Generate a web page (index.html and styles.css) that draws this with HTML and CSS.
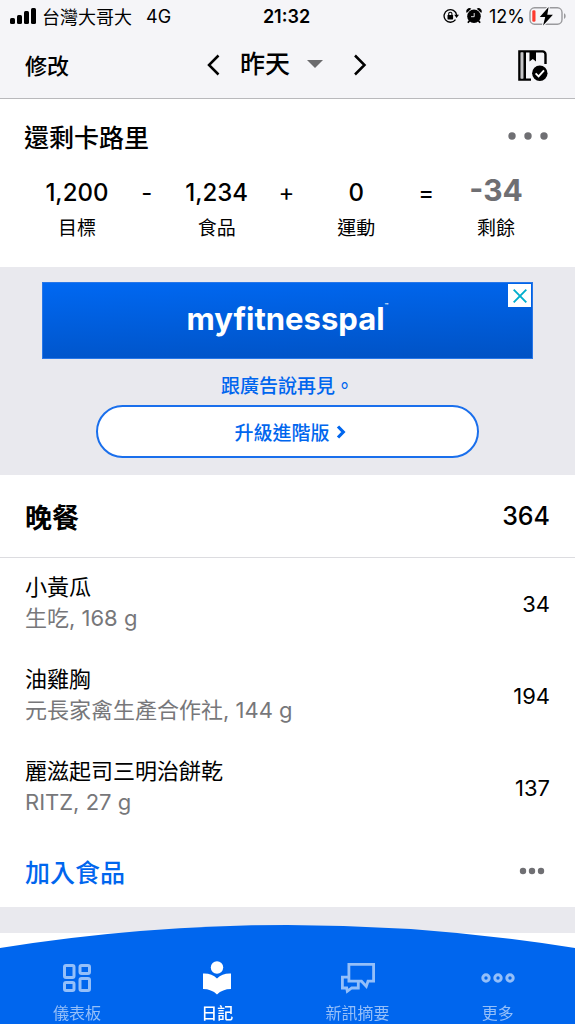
FILE: index.html
```html
<!DOCTYPE html>
<html lang="zh-Hant">
<head>
<meta charset="utf-8">
<meta name="viewport" content="width=device-width, initial-scale=1">
<title>日記</title>
<link rel="stylesheet" href="styles.css">
</head>
<body>
<div class="app">
  <div class="status">
    <div class="status-left">
      <svg width="26" height="16" viewBox="0 0 26 16"><rect x="0" y="10" width="5" height="6" rx="1.5"/><rect x="7" y="7" width="5" height="9" rx="1.5"/><rect x="14" y="3" width="5" height="13" rx="1.5"/><rect x="21" y="0" width="5" height="16" rx="1.5"/></svg>
      <span>台灣大哥大</span>
      <span class="network">4G</span>
    </div>
    <div class="status-time">21:32</div>
    <div class="status-right">
      <svg class="lock" width="16" height="16" viewBox="0 0 16 16"><path d="M13.600 7A6.300 6.300 0 1 0 12.500 11.600" fill="none" stroke="#000" stroke-width="1.300"/><path d="M11.200 6.800h4.800l-2.400 3.200z"/><rect x="4.500" y="7" width="5.600" height="4.400" rx=".6"/><path d="M5.700 7.300V5.800a1.600 1.600 0 0 1 3.200 0v1.500" fill="none" stroke="#000" stroke-width="1.100"/></svg>
      <svg class="alarm" width="16" height="16" viewBox="0 0 16 16"><circle cx="8" cy="8.200" r="6.800"/><path d="M.7 4.900A3.200 3.200 0 0 1 5.300.7zM10.700.7a3.200 3.200 0 0 1 4.600 4.200z"/><path d="M3.500 12.800l-1.600 2M12.500 12.800l1.600 2" fill="none" stroke="#000" stroke-width="1.800"/><path d="M8.200 5v3.700H5" fill="none" stroke="#f5f5f8" stroke-width=".9"/></svg>
      <span>12%</span>
      <svg width="38" height="20" viewBox="0 0 38 20"><rect x="1" y="1.800" width="32" height="16.400" rx="4.600" fill="none" stroke="#9a9a9d" stroke-width="1.400"/><path d="M35 7.200c2.200.7 2.200 4.900 0 5.600z" fill="#9a9a9d"/><rect x="3.300" y="4.200" width="3.200" height="11.600" rx="1.300" fill="#fd3a30"/><path d="M19.600 1 10.800 11h5.400l-2.100 8.400L23.900 8.800h-5.600z" stroke="#f5f5f8" stroke-width="2.400" paint-order="stroke"/></svg>
    </div>
  </div>

  <header class="topbar">
    <button class="edit" type="button">修改</button>
    <div class="day-nav">
      <button type="button" aria-label="前一天"><svg width="14" height="22" viewBox="0 0 14 22"><path d="M12.500 1.500 3 11l9.500 9.500" fill="none" stroke="#000" stroke-width="2.500"/></svg></button>
      <button class="day" type="button">昨天 <svg width="16" height="8" viewBox="0 0 16 8"><path d="M0 0h16L8 8z" fill="#6b6b6d"/></svg></button>
      <button type="button" aria-label="後一天"><svg width="14" height="22" viewBox="0 0 14 22"><path d="m2 1.500 9.500 9.500L2 20.500" fill="none" stroke="#000" stroke-width="2.500"/></svg></button>
    </div>
    <button class="complete" type="button" aria-label="完成日記"><svg width="30" height="31" viewBox="0 0 30 31"><path d="M13 29.600H1.400V1.400H24.500a3 3 0 0 1 3 3V14" fill="none" stroke="#000" stroke-width="2.400"/><path d="M4 2.600v25.800" stroke="#c4c4c6" stroke-width="2.200"/><path d="M6.700 2v27" stroke="#000" stroke-width="2.600"/><path d="M11.500 1h6.500v10.500l-3.200-2.500-3.300 2.500z"/><circle cx="21.800" cy="23.200" r="7.700"/><path d="m17.600 23.300 3 3 5.400-6" fill="none" stroke="#fff" stroke-width="1.900"/></svg></button>
  </header>

  <main>
    <section class="summary">
      <div class="summary-head">
        <h1>還剩卡路里</h1>
        <button type="button" aria-label="選項"><svg width="40" height="8" viewBox="0 0 40 8"><g fill="#6f6f73"><circle cx="4" cy="4" r="3.700"/><circle cx="20" cy="4" r="3.700"/><circle cx="36" cy="4" r="3.700"/></g></svg></button>
      </div>
      <div class="equation">
        <div class="term"><strong>1,200</strong><span>目標</span></div>
        <div class="term"><b>-</b></div>
        <div class="term"><strong>1,234</strong><span>食品</span></div>
        <div class="term"><b>+</b></div>
        <div class="term"><strong>0</strong><span>運動</span></div>
        <div class="term"><b>=</b></div>
        <div class="term"><strong class="remaining">-34</strong><span>剩餘</span></div>
      </div>
    </section>

    <section class="promo">
      <div class="banner">
        <div class="brand">myfitnesspal<small>™</small></div>
        <button class="close" type="button" aria-label="關閉廣告"><svg width="14" height="14" viewBox="0 0 14 14"><path d="m.7.7 12.600 12.600M13.300.7.7 13.300" fill="none" stroke="#00aecd" stroke-width="1.900"/></svg></button>
      </div>
      <p>跟廣告說再見。</p>
      <button class="upgrade" type="button">升級進階版 <svg width="10" height="14" viewBox="0 0 10 14"><path d="m2 1.500 5.300 5.500L2 12.500" fill="none" stroke="#0066ee" stroke-width="3.200"/></svg></button>
    </section>

    <section class="meal">
      <div class="meal-head"><h2>晚餐</h2><span>364</span></div>
      <ul>
        <li><div><h3>小黃瓜</h3><p>生吃, 168 g</p></div><span>34</span></li>
        <li><div><h3>油雞胸</h3><p>元長家禽生產合作社, 144 g</p></div><span>194</span></li>
        <li><div><h3>麗滋起司三明治餅乾</h3><p>RITZ, 27 g</p></div><span>137</span></li>
      </ul>
      <div class="meal-foot">
        <button class="add" type="button">加入食品</button>
        <button class="more" type="button" aria-label="更多選項"><svg width="26" height="8" viewBox="0 0 26 8"><g fill="#6f6f73"><circle cx="4" cy="4" r="3.200"/><circle cx="13" cy="4" r="3.200"/><circle cx="22" cy="4" r="3.200"/></g></svg></button>
      </div>
    </section>
  </main>

  <nav class="tabs">
    <svg class="arc" viewBox="0 0 575 23" preserveAspectRatio="none"><path d="M0 23Q287.500-23 575 23z" fill="#0066ee"/></svg>
    <div class="tab-row">
      <a href="#dashboard"><svg width="28" height="28" viewBox="0 0 28 28"><g fill="none" stroke="currentColor" stroke-width="3"><rect x="1.500" y="1.500" width="9.500" height="12" rx="1.500"/><rect x="17" y="1.500" width="9.500" height="8" rx="1.500"/><rect x="1.500" y="18.500" width="9.500" height="8" rx="1.500"/><rect x="17" y="14.500" width="9.500" height="12" rx="1.500"/></g></svg><span>儀表板</span></a>
      <a class="active" href="#diary" aria-current="page"><svg width="28" height="34" viewBox="0 0 28 34"><g fill="currentColor"><circle cx="14" cy="6.500" r="6.200"/><path d="M0 12.500q8.500-.5 14 5 5.500-5.500 14-5V28q-8.500 0-14 5.500Q8.500 28 0 28z"/></g></svg><span>日記</span></a>
      <a href="#news"><svg width="34" height="32" viewBox="0 0 34 32"><g fill="none" stroke="currentColor" stroke-width="2.800"><path d="M7.900 2.400h24.700V19.200h-5.600l-1.700 5.200-4.800-5.200H7.900z"/><path d="M7.900 15.200H1.400V26h4.300l.6 3.300L10.700 26h6.600v-6"/></g></svg><span>新訊摘要</span></a>
      <a href="#more"><svg width="34" height="10" viewBox="0 0 34 10"><g fill="none" stroke="currentColor" stroke-width="3"><circle cx="5" cy="5" r="3.200"/><circle cx="17" cy="5" r="3.200"/><circle cx="29" cy="5" r="3.200"/></g></svg><span>更多</span></a>
    </div>
  </nav>
</div>
</body>
</html>
```
FILE: styles.css
```css
* { box-sizing: border-box; }
body {
  margin: 0;
  background: #fff;
  color: #000;
  font-family: Inter, "Noto Sans CJK TC", sans-serif;
}
h1, h2, h3, p, ul { margin: 0; padding: 0; }
ul { list-style: none; }
svg { display: block; flex: none; }
button {
  margin: 0;
  padding: 0;
  border: 0;
  background: none;
  color: inherit;
  font: inherit;
  cursor: pointer;
}
.app { min-height: 100vh; padding-bottom: 98px; }

.status {
  display: grid;
  grid-template-columns: 1fr auto 1fr;
  align-items: center;
  height: 32px;
  padding: 0 8px 0 10px;
  background: #f5f5f8;
  font-size: 18px;
}
.status-left, .status-right { display: flex; align-items: center; }
.status-left { gap: 6px; }
.network { margin-left: 8px; }
.status-time { font-weight: 600; margin-right: 4px; }
.status-right { justify-content: flex-end; }
.lock, .alarm { margin-right: 7px; }
.status-right span { margin-right: 4px; }

.topbar {
  display: grid;
  grid-template-columns: 1fr auto 1fr;
  align-items: center;
  height: 67px;
  padding: 0 27px 0 25px;
  border-bottom: 1px solid #b9b9bc;
  background: #f5f5f8;
}
.edit { justify-self: start; font-size: 22px; font-weight: 500; }
.day-nav { display: flex; align-items: center; gap: 20px; }
.day { display: flex; align-items: center; gap: 17px; font-size: 25px; font-weight: 500; line-height: 32px; }
.day-nav button:last-child { margin-left: 10px; }
.edit, .day { padding-bottom: 2px; }
.complete { justify-self: end; }

.summary { height: 168px; padding: 19px 25px 0 24px; }
.summary-head { display: flex; align-items: center; justify-content: space-between; height: 36px; }
.summary-head button { margin-right: 2px; }
h1 { font-size: 25px; font-weight: 500; }
.equation { display: grid; grid-template-columns: repeat(7, 1fr); margin: 18px 19px 0 18px; }
.term { display: flex; flex-direction: column; align-items: center; }
.term strong, .term b { font-size: 24px; font-weight: 500; line-height: 42px; }
.term b { font-weight: 400; }
.term span { font-size: 19px; line-height: 30px; }
.term .remaining { color: #6f6f73; font-size: 30px; font-weight: 700; line-height: 36px; margin-bottom: 6px; }

.promo {
  display: flex;
  flex-direction: column;
  align-items: center;
  height: 208px;
  padding: 15px 42px 17px;
  background: #e9e9ee;
  color: #0066ee;
  font-size: 19px;
  font-weight: 500;
}
.banner {
  position: relative;
  display: flex;
  align-items: center;
  justify-content: center;
  width: 100%;
  height: 77px;
  border: 1px solid #2877e8;
  background: linear-gradient(178deg, #0068f2, #0052c4);
  color: #fff;
}
.brand { display: flex; font-size: 31px; font-weight: 700; line-height: 70px; padding-bottom: 4px; }
.brand small { font-size: 6px; line-height: 44px; }
.close {
  position: absolute;
  top: 1px;
  right: 1px;
  display: grid;
  place-items: center;
  width: 23px;
  height: 23px;
  background: #fff;
}
.promo p { line-height: 28px; margin: 14px 0 4px; }
.upgrade {
  display: flex;
  align-items: center;
  justify-content: center;
  gap: 6px;
  width: 78%;
  height: 53px;
  padding-left: 5px;
  border: 2px solid #1a6fec;
  border-radius: 27px;
  background: #fff;
}

.meal { border-bottom: 26px solid #e9e9ee; }
.meal-head, .meal li, .meal-foot {
  display: flex;
  align-items: center;
  justify-content: space-between;
  padding: 0 25px;
}
.meal-head { height: 83px; border-bottom: 1px solid #dcdce0; font-size: 25px; font-weight: 500; }
h2 { font-size: 27px; font-weight: 700; }
.meal li { height: 92px; font-size: 22px; }
.meal li div { padding-bottom: 2px; }
.meal h3, .meal p { font-size: 22px; font-weight: 400; line-height: 31px; }
.meal p { color: #77777a; }
.meal-foot { height: 73px; }
.add { color: #0066ee; font-size: 25px; font-weight: 500; }
.more { margin-right: 5px; }

.tabs { position: fixed; right: 0; bottom: 0; left: 0; }
.arc { display: block; width: 100%; height: 23px; }
.tab-row {
  display: grid;
  grid-template-columns: repeat(4, 1fr);
  height: 76px;
  padding: 10px 7px 0;
  background: #0066ee;
}
.tab-row a {
  display: grid;
  grid-template-rows: 40px 28px;
  place-items: center;
  color: #94bff9;
  font-size: 16px;
  text-decoration: none;
}
.tab-row .active { color: #fff; font-weight: 500; }
```
